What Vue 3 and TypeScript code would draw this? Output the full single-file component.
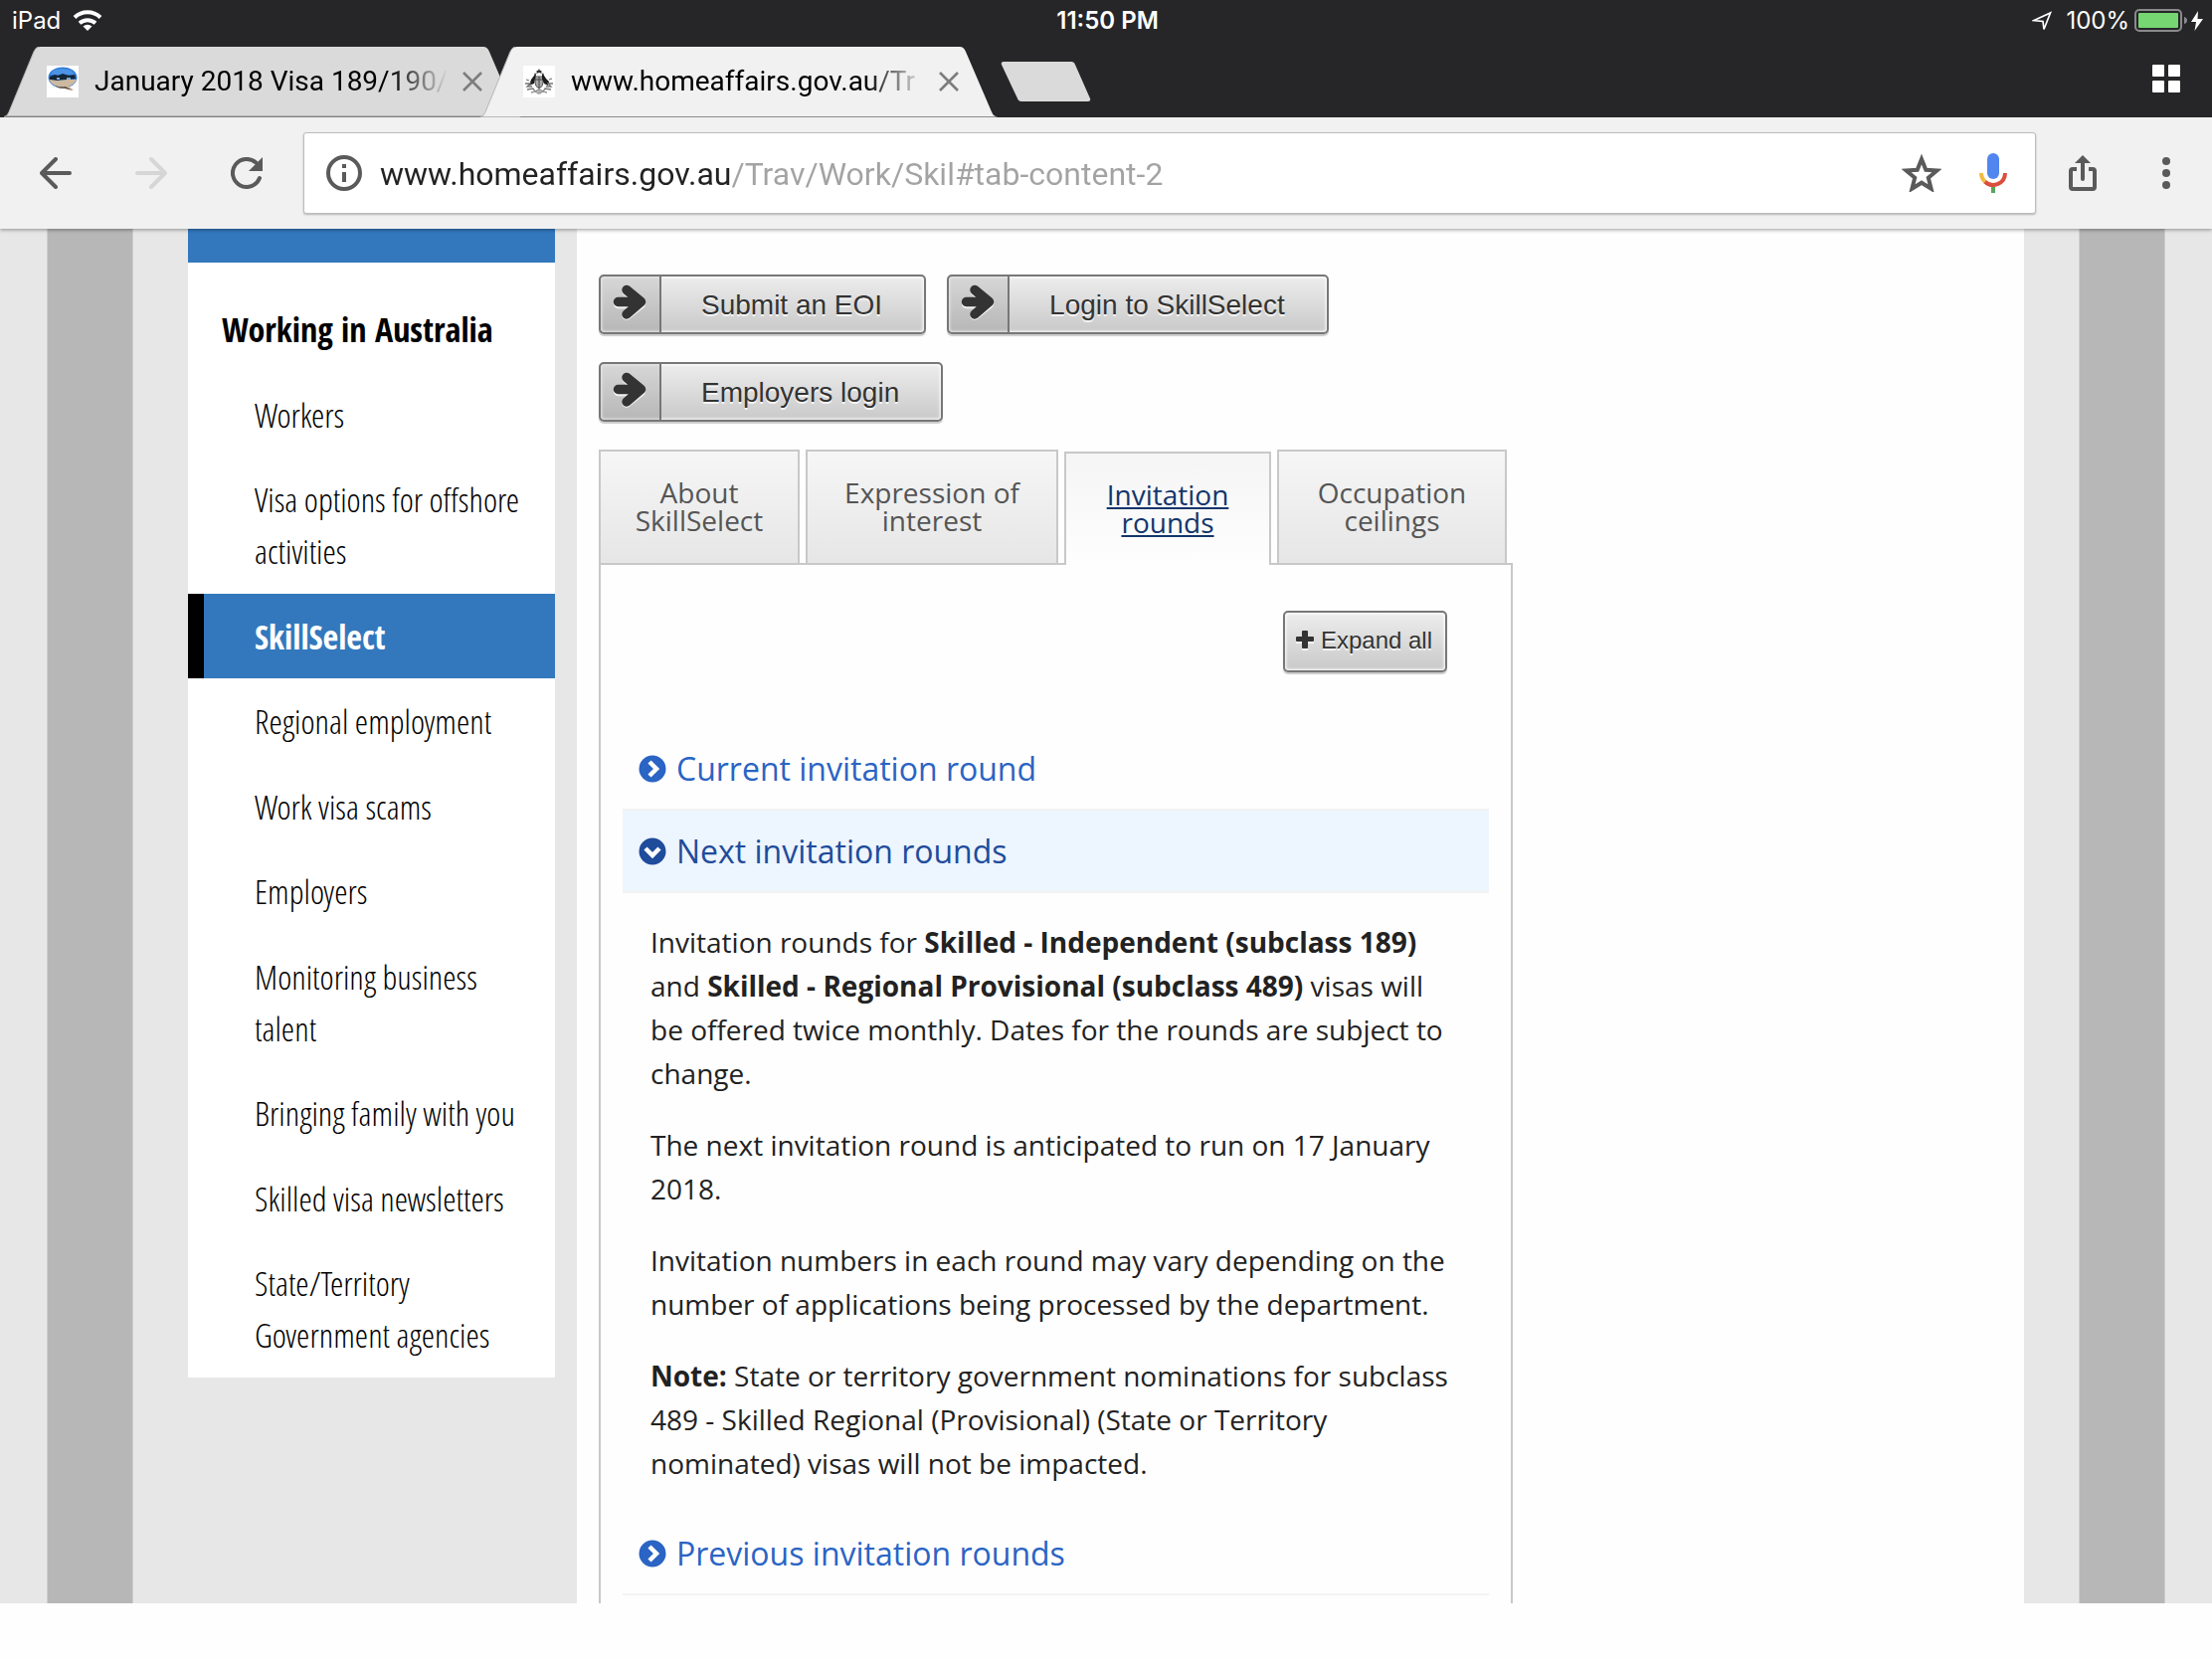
<script setup lang="ts">
import { ref } from 'vue'

interface BrowserTab { title: string; icon: 'globe' | 'crest' }
interface NavItem { label: string; current?: boolean }

const browserTabs: BrowserTab[] = [
  { title: 'January 2018 Visa 189/190/', icon: 'globe' },
  { title: 'www.homeaffairs.gov.au/Tr', icon: 'crest' },
]
const activeBrowserTab = ref(1)
const address = ref('www.homeaffairs.gov.au/Trav/Work/Skil#tab-content-2')

const navItems: NavItem[] = [
  { label: 'Workers' },
  { label: 'Visa options for offshore activities' },
  { label: 'SkillSelect', current: true },
  { label: 'Regional employment' },
  { label: 'Work visa scams' },
  { label: 'Employers' },
  { label: 'Monitoring business talent' },
  { label: 'Bringing family with you' },
  { label: 'Skilled visa newsletters' },
  { label: 'State/Territory Government agencies' },
]

const actions: string[] = ['Submit an EOI', 'Login to SkillSelect', 'Employers login']
const contentTabs: string[] = ['About SkillSelect', 'Expression of interest', 'Invitation rounds', 'Occupation ceilings']
const activeContentTab = ref(2)
const nextOpen = ref(true)
</script>

<template>
  <div class="screen">
    <header class="chrome">
      <div class="status">
        <div class="status-side">
          <span>iPad</span>
          <svg class="wifi" width="30" height="22" viewBox="0 0 30 22" fill="none" stroke="#fff" stroke-width="4">
            <path d="M2 7.500a19 19 0 0 1 26 0" />
            <path d="M7 13.200a12 12 0 0 1 16 0" />
            <path d="M15 21l-4.500-4.600a7 7 0 0 1 9 0z" fill="#fff" stroke="none" />
          </svg>
        </div>
        <time class="clock">11:50 PM</time>
        <div class="status-side right">
          <svg width="22" height="22" viewBox="0 0 22 22" fill="none" stroke="#fff" stroke-width="1.700" stroke-linejoin="miter">
            <path d="M2 10.500L18.500 3 12 19.500 11 11.500z" />
          </svg>
          <span class="percent">100%</span>
          <svg width="54" height="24" viewBox="0 0 54 24">
            <rect x="1" y="1" width="46" height="21" rx="4" fill="none" stroke="#8a8a8c" stroke-width="2" />
            <rect x="4" y="4" width="40" height="15" rx="1" fill="#76d672" />
            <path d="M50 8q3 1 3 3.500t-3 3.500z" fill="#8a8a8c" />
          </svg>
          <svg class="bolt" width="12" height="20" viewBox="0 0 12 20"><path d="M7 0L0 11h5L3.500 20 12 8H6.500z" fill="#fff" /></svg>
        </div>
      </div>
      <div class="tab-strip">
        <div
          v-for="(tab, i) in browserTabs"
          :key="tab.title"
          class="btab"
          :class="{ active: i === activeBrowserTab }"
        >
          <svg class="btab-shape" viewBox="0 0 520 72" preserveAspectRatio="none">
            <path
              d="M0 71.500q3 0 5-5L30 5q2-5 6-5H482q4 0 6 5l26 61.500q2 5 6 5z"
              :fill="i === activeBrowserTab ? '#f1f1f1' : '#dadada'"
            />
            <path d="M0 71.500q3 0 5-5L30 5q2-5 6-5" fill="none" stroke="#b5b5b5" />
            <path v-if="i !== activeBrowserTab" d="M2 70.500H518" stroke="#b5b5b5" stroke-width="1" />
          </svg>
          <svg v-if="tab.icon === 'globe'" class="favicon" viewBox="0 0 32 32">
            <rect width="32" height="32" fill="#fff" />
            <ellipse cx="16" cy="12" rx="14.500" ry="10.500" fill="#2f7bd8" />
            <path d="M6 5q9-4 19 0l3 4H4z" fill="#4b93e4" />
            <path d="M3 11l5-2 3 1 5-2 6 2 6-1 1 4-9 1-11 1-6-1z" fill="#152637" />
            <path d="M10 12h3v2h-3zM20 12h4v2h-4z" fill="#7fa6cf" />
            <path d="M2 14l9 1 10-1 9 0q-2 5-8 7 4 2 5 4-6-1-9-3-12 0-16-8z" fill="#cdb99f" />
            <path d="M8 20q5 2 11 1l7 4-8-2q-7 0-10-3z" fill="#6b5748" />
          </svg>
          <svg v-else class="favicon" viewBox="0 0 32 32">
            <rect width="32" height="32" fill="#fff" />
            <path d="M16 3l1 2h2l-1 1 1 2-3-1-3 1 1-2-1-1h2z" fill="#333" />
            <path d="M12 11h8v6q0 4-4 6-4-2-4-6z" fill="#aaa" stroke="#555" />
            <path d="M12 14h8M16 11v12" stroke="#444" />
            <path d="M12 7l-1 3-3 4-2 6 5-2 1-5 1-4z" fill="#1c1c1c" />
            <path d="M20 7l1 3 2 3 3 3-1 4-4-2-2-5 0-4z" fill="#1c1c1c" />
            <g fill="none" stroke="#777" stroke-width="1.300">
              <path d="M3 14l3 1M2 18l5 0-3 3 5 0M4 24l6-1 2 3 4-2 4 2 2-3 6 1M29 13l-3 1M30 18l-5 0 3 3-5 0" />
              <path d="M8 27l4-1 4 2 4-2 4 1M14 28l2-2 2 2" stroke="#999" />
            </g>
          </svg>
          <button class="btab-title" type="button" @click="activeBrowserTab = i">{{ tab.title }}</button>
          <button class="icon-btn" type="button" aria-label="Close tab">
            <svg width="20" height="20" viewBox="0 0 20 20" stroke="#7d7d7d" stroke-width="2.600"><path d="M1 1l18 18M19 1L1 19" /></svg>
          </button>
        </div>
        <button class="icon-btn new-tab" type="button" aria-label="New tab">
          <svg width="92" height="40" viewBox="0 0 92 40"><path d="M3 0H71q3 0 4 3l15 34q1 3-2 3H21q-3 0-4-3L1 3Q0 0 3 0z" fill="#dadada" /></svg>
        </button>
        <button class="icon-btn grid-btn" type="button" aria-label="Show tabs">
          <svg width="28" height="28" viewBox="0 0 28 28" fill="#fff">
            <rect width="12" height="12" rx="1" /><rect x="16" width="12" height="12" rx="1" />
            <rect y="16" width="12" height="12" rx="1" /><rect x="16" y="16" width="12" height="12" rx="1" />
          </svg>
        </button>
      </div>
      <div class="toolbar">
        <div class="history">
          <button class="icon-btn" type="button" aria-label="Back">
            <svg width="32" height="32" viewBox="0 0 32 32" fill="none" stroke="#5a5a5a" stroke-width="4" stroke-linecap="round" stroke-linejoin="round"><path d="M30 16H3M16 2L2 16l14 14" /></svg>
          </button>
          <button class="icon-btn" type="button" aria-label="Forward" disabled>
            <svg width="32" height="32" viewBox="0 0 32 32" fill="none" stroke="#d6d6d6" stroke-width="4" stroke-linecap="round" stroke-linejoin="round"><path d="M2 16h27M16 2l14 14-14 14" /></svg>
          </button>
          <button class="icon-btn" type="button" aria-label="Reload">
            <svg width="32" height="32" viewBox="0 0 32 32" fill="none" stroke="#5a5a5a" stroke-width="4" stroke-linecap="round">
              <path d="M29 21A14 14 0 1 1 26 6.200" /><path d="M32 0v14H18z" fill="#5a5a5a" stroke="none" />
            </svg>
          </button>
        </div>
        <div class="omnibox">
          <svg width="36" height="36" viewBox="0 0 36 36">
            <circle cx="18" cy="18" r="16" fill="none" stroke="#5a5a5a" stroke-width="4" />
            <path d="M16 9h4v4h-4zM16 17h4v10h-4z" fill="#5a5a5a" />
          </svg>
          <input v-model="address" class="address" type="text" aria-label="Address" spellcheck="false" />
          <button class="icon-btn" type="button" aria-label="Bookmark">
            <svg width="40" height="38" viewBox="0 0 40 38" fill="none" stroke="#5a5a5a" stroke-width="4"><path d="M20 5l4.300 10.800L35.500 16.500l-8.700 7.300 2.800 10.900L20 28.700l-9.600 6 2.800-10.900-8.700-7.300 11.200-.7z" /></svg>
          </button>
          <button class="icon-btn" type="button" aria-label="Voice search">
            <svg width="28" height="40" viewBox="0 0 28 40" fill="none">
              <rect x="8" width="12" height="26" rx="6" fill="#5186ee" />
              <path d="M2 20a12 12 0 0 0 4 8.900" stroke="#f0bc42" stroke-width="4" />
              <path d="M5.800 28.700A12 12 0 0 0 26 20" stroke="#da4f3e" stroke-width="4" />
              <path d="M12 34h4v6h-4z" fill="#58a55c" />
            </svg>
          </button>
        </div>
        <button class="icon-btn share" type="button" aria-label="Share">
          <svg width="28" height="36" viewBox="0 0 28 36" fill="none" stroke="#5a5a5a" stroke-width="4">
            <path d="M8 14H4q-2 0-2 2v16q0 2 2 2h20q2 0 2-2V16q0-2-2-2h-4" />
            <path d="M14 6v18" stroke-linecap="round" /><path d="M14 0l8 8H6z" fill="#5a5a5a" stroke="none" />
          </svg>
        </button>
        <button class="icon-btn menu" type="button" aria-label="Menu">
          <svg width="8" height="32" viewBox="0 0 8 32" fill="#5a5a5a"><circle cx="4" cy="4" r="4" /><circle cx="4" cy="16" r="4" /><circle cx="4" cy="28" r="4" /></svg>
        </button>
      </div>
    </header>

    <div class="page">
      <div class="stripe"></div>
      <aside class="sidebar">
        <div class="sidebar-cap"></div>
        <h2 class="sidebar-title">Working in Australia</h2>
        <ul class="nav">
          <li v-for="item in navItems" :key="item.label">
            <a href="#" class="nav-link" :class="{ current: item.current }">{{ item.label }}</a>
          </li>
        </ul>
      </aside>
      <main class="main">
        <div class="column">
          <div class="actions">
            <button v-for="label in actions" :key="label" class="action" type="button">
              <span class="action-icon">
                <svg width="36" height="38" viewBox="0 0 36 38" fill="none" stroke-width="9.500" stroke-linecap="round" stroke-linejoin="round">
                  <g stroke="#f2f2f2"><path d="M5.500 20.500H22M14 8l14.500 12.500L14 32" /></g>
                  <g stroke="#333"><path d="M5.500 18.500H22M14 6.500l14.500 12L14 31" /></g>
                </svg>
              </span>
              <span class="action-label">{{ label }}</span>
            </button>
          </div>
          <div class="tabs" role="tablist">
            <button
              v-for="(label, i) in contentTabs"
              :key="label"
              class="tab"
              :class="{ active: i === activeContentTab }"
              type="button"
              role="tab"
              :aria-selected="i === activeContentTab"
              @click="activeContentTab = i"
            >{{ label }}</button>
          </div>
          <section class="panel">
            <button class="expand" type="button">
              <svg width="20" height="22" viewBox="0 0 20 22">
                <path d="M7 3h6v6h6v5h-6v7H7v-7H1V9h6z" fill="#f5f5f5" />
                <path d="M8 1h4q1 0 1 1v5h5q1 0 1 1v3q0 1-1 1h-5v6q0 1-1 1H8q-1 0-1-1v-6H2q-1 0-1-1V8q0-1 1-1h5V2q0-1 1-1z" fill="#333" />
              </svg>
              <span>Expand all</span>
            </button>
            <h3 class="fold">
              <a href="#">
                <svg width="28" height="28" viewBox="0 0 28 28"><circle cx="14" cy="14" r="13.500" fill="#2a64c4" /><path d="M11 7l7 7-7 7" fill="none" stroke="#fff" stroke-width="4.500" /></svg>
                Current invitation round
              </a>
            </h3>
            <h3 class="fold open">
              <a href="#" @click.prevent="nextOpen = !nextOpen">
                <svg width="28" height="28" viewBox="0 0 28 28"><circle cx="14" cy="14" r="13.500" fill="#1f4c9b" /><path d="M7 11l7 7 7-7" fill="none" stroke="#fff" stroke-width="4.500" /></svg>
                Next invitation rounds
              </a>
            </h3>
            <div v-if="nextOpen" class="prose">
              <p>
                Invitation rounds for <strong>Skilled - Independent (subclass 189)</strong> and
                <strong>Skilled - Regional Provisional (subclass 489)</strong> visas will be offered twice monthly.
                Dates for the rounds are subject to change.
              </p>
              <p>The next invitation round is anticipated to run on 17 January 2018.</p>
              <p>
                Invitation numbers in each round may vary depending on the number of applications being processed by
                the department.
              </p>
              <p>
                <strong>Note:</strong> State or territory government nominations for subclass 489 - Skilled Regional
                (Provisional) (State or Territory nominated) visas will not be impacted.
              </p>
            </div>
            <h3 class="fold">
              <a href="#">
                <svg width="28" height="28" viewBox="0 0 28 28"><circle cx="14" cy="14" r="13.500" fill="#2a64c4" /><path d="M11 7l7 7-7 7" fill="none" stroke="#fff" stroke-width="4.500" /></svg>
                Previous invitation rounds
              </a>
            </h3>
          </section>
        </div>
      </main>
      <div class="stripe"></div>
    </div>
  </div>
</template>

<style>
body { background: #fefefe; }
</style>

<style scoped>
.screen, .screen * { box-sizing: border-box; }
.screen { font-family: "Open Sans", sans-serif; color: #222; }
button, input { font: inherit; color: inherit; }
svg { display: block; flex: none; }
.icon-btn { display: flex; flex: none; padding: 0; border: 0; background: none; }

.chrome { position: relative; z-index: 2; background: #262628; font-family: Roboto, sans-serif; box-shadow: 0 1px 4px rgba(0, 0, 0, .4); }
.status { display: flex; align-items: center; height: 40px; padding: 2px 9px 0 12px; color: #fff; font: 24px/38px Inter, sans-serif; }
.status-side { display: flex; flex: 1; align-items: center; }
.status-side.right { justify-content: flex-end; }
.wifi { margin-left: 12px; }
.clock { font-weight: 600; }
.percent { margin: 0 5px 0 12px; }
.bolt { margin-left: 3px; }

.tab-strip { display: flex; height: 78px; padding: 7px 32px 0 4px; }
.btab { position: relative; display: flex; align-items: center; width: 520px; height: 71px; padding: 0 0 2px 43px; }
.btab + .btab { margin-left: -41px; }
.btab.active { z-index: 1; }
.btab-shape { position: absolute; inset: 0; width: 100%; height: 100%; }
.favicon { position: relative; width: 32px; height: 32px; }
.btab-title { position: relative; width: 356px; margin: 0 14px 0 16px; padding: 0; border: 0; background: none; color: #000; font-size: 28px; line-height: 40px; text-align: left; white-space: nowrap; overflow: hidden; -webkit-mask-image: linear-gradient(to right, #000 calc(100% - 60px), transparent); mask-image: linear-gradient(to right, #000 calc(100% - 60px), transparent); }
.btab .icon-btn { position: relative; }
.new-tab { align-self: center; margin: 0 auto 2px 3px; }
.grid-btn { align-self: center; margin-bottom: 8px; }

.toolbar { display: flex; align-items: center; height: 112px; padding: 0 42px 0 40px; background: #f1f1f1; }
.history { display: flex; gap: 64px; margin-right: 41px; }
.omnibox { display: flex; flex: 1; align-items: center; gap: 38px; height: 82px; padding: 0 28px 0 22px; border: 1px solid #bdbdbd; border-radius: 3px; background: #fff; box-shadow: 0 1px 2px rgba(0, 0, 0, .25); }
.address { flex: 1; min-width: 0; height: 48px; margin-left: -20px; padding: 2px 0 0; border: 0; outline: 0; font-size: 32px; color: transparent; background: linear-gradient(to right, #222 352px, #a3a3a3 352px); -webkit-background-clip: text; background-clip: text; }
.share { margin-left: 33px; }
.menu { margin-left: 66px; }

.page { display: flex; padding: 0 47px; background: #e7e7e7; }
.stripe { flex: none; width: 87px; background: #b7b7b7; border: solid #cecece; border-width: 0 1px; }
.sidebar { align-self: flex-start; flex: none; width: 369px; margin: 0 22px 0 55px; background: #fff; font-family: "Open Sans Condensed", "Open Sans", sans-serif; font-size: 34px; line-height: 52px; color: #000; }
.sidebar-cap { height: 34px; background: #3378bd; }
.sidebar-title { margin: 0; padding: 41px 16px 17px 34px; font-size: 34px; line-height: 52px; font-weight: 700; }
.nav { margin: 0; padding: 0; list-style: none; }
.nav li:nth-child(even) { padding-bottom: 1px; }
.nav-link { display: block; padding: 17px 24px 16px 67px; color: #000; font-family: "Open Sans Condensed Light", "Open Sans Condensed", "Open Sans", sans-serif; font-weight: 300; text-decoration: none; }
.nav-link.current { padding-left: 51px; border-left: 16px solid #000; background: #3378bd; color: #fff; font-family: "Open Sans Condensed", "Open Sans", sans-serif; font-weight: 700; }

.main { flex: 1; min-width: 0; margin-right: 55px; padding: 46px 22px 0; background: #fefefe; }
.column { max-width: 919px; }
.actions { display: flex; flex-wrap: wrap; gap: 28px 21px; }
.action, .expand { display: flex; border: 2px solid #777; border-radius: 5px; background: linear-gradient(#ededed, #c9c9c9); box-shadow: 0 2px 1px rgba(0, 0, 0, .2), inset 0 0 3px 1px #fff; color: #333; font-family: "Liberation Sans", Arial, sans-serif; text-shadow: 0 2px 0 #f5f5f5; }
.action { height: 60px; padding: 0; font-size: 28px; line-height: 58px; }
.action-icon { display: flex; align-items: center; width: 61px; height: 56px; padding: 0 0 4px 12px; border-right: 2px solid #777; background: rgba(0, 0, 0, .09); }
.action-label { padding: 0 42px 0 40px; }

.tabs { display: grid; grid-template-columns: 202fr 254fr 208fr 231fr; gap: 6px; margin-top: 28px; padding-right: 6px; }
.tab { height: 114px; padding: 0 24px 2px; border: 2px solid #c8c8c8; border-bottom: 0; background: linear-gradient(#f6f6f6, #e6e6e6); color: #555; font-size: 28px; line-height: 28px; }
.tab.active { position: relative; margin: 2px 0 -2px; background: linear-gradient(#f5f5f5, #fefefe); color: #13366b; text-decoration: underline; text-decoration-thickness: 2px; text-underline-offset: 2px; }
.panel { padding: 46px 22px 8px; border: 2px solid #c8c8c8; border-bottom: 0; }
.expand { align-items: center; gap: 6px; height: 62px; margin: 0 42px 56px auto; padding: 0 13px 2px 10px; font-size: 24px; line-height: 32px; }
.fold { height: 83px; margin: 0; padding: 17px 16px 0; border-bottom: 2px solid #f3f3f3; font-size: 32px; line-height: 48px; font-weight: 400; }
.fold a { display: flex; align-items: center; gap: 10px; color: #2a64c4; text-decoration: none; }
.fold.open { background: #edf5fe; }
.fold.open a { color: #1f4c9b; }
.prose { padding: 27px 35px 28px 28px; font-size: 28px; line-height: 44px; }
.prose p { margin: 0 0 28px; }
.prose p:last-child { margin-bottom: 0; }
</style>
